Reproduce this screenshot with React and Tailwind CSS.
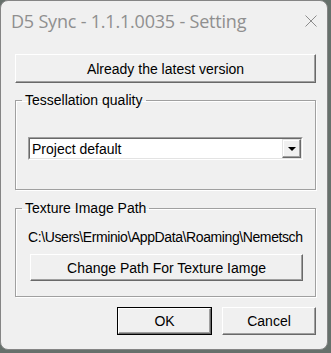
const win = "font-['Liberation_Sans',Arial,sans-serif] text-[14px] leading-[16px] text-black";

function RaisedButton({ className = '', children, isDefault = false }) {
    return (
        <div className={`${isDefault ? 'border border-black' : ''} ${className}`}>
            <div className="h-full w-full border border-t-white border-l-white border-r-[#696969] border-b-[#696969] bg-[#f0f0f0] shadow-[inset_-1px_-1px_0_#a0a0a0] flex items-center justify-center">
                {children}
            </div>
        </div>
    );
}

function GroupBox({ label, className = '', children }) {
    return (
        <fieldset className={`min-w-0 border border-[#a0a0a0] shadow-[1px_1px_0_#ffffff,inset_1px_1px_0_#ffffff] ${className}`}>
            <legend className="-ml-[6px] px-[3px]">{label}</legend>
            {children}
        </fieldset>
    );
}

export default function App() {
    return (
        <div className="w-[331px] h-[353px] bg-[#66706b] overflow-hidden">
            <div className={`w-[328px] h-[350px] rounded-[8px] bg-[#f0f0f0] border border-[#858585] overflow-hidden flex flex-col ${win}`}>
                {/* Title bar */}
                <div className="h-[39px] flex items-center justify-between pl-[10px] pr-[10px]">
                    <span className="font-['Open_Sans',sans-serif] text-[18px] leading-[20px] text-[#8f8f8f] tracking-[-0.2px]">
                        D5 Sync - 1.1.1.0035 - Setting
                    </span>
                    <svg width="12" height="12" viewBox="0 0 12 12" className="mt-[1px]">
                        <path d="M0.5 0.5 L11.5 11.5 M11.5 0.5 L0.5 11.5" stroke="#8c8c8c" strokeWidth="1" />
                    </svg>
                </div>

                <div className="flex flex-col pl-[14px] pr-[11px]">
                    <RaisedButton className="mt-[14px] h-[29px]">Already the latest version</RaisedButton>

                    <GroupBox label="Tessellation quality" className="mt-[9px] h-[98px] px-[12px]">
                        <div className="mt-[29px] h-[23px] border border-t-[#a0a0a0] border-l-[#a0a0a0] border-r-white border-b-white">
                            <div className="h-full border border-t-[#696969] border-l-[#696969] border-r-[#e3e3e3] border-b-[#e3e3e3] bg-white flex items-center justify-between pl-[2px]">
                                <span>Project default</span>
                                <div className="w-[19px] h-full border border-t-[#e3e3e3] border-l-[#e3e3e3] border-r-[#696969] border-b-[#696969] bg-[#f0f0f0] shadow-[inset_-1px_-1px_0_#a0a0a0,inset_1px_1px_0_#ffffff] flex items-center justify-center">
                                    <svg width="8" height="4" viewBox="0 0 8 4">
                                        <path d="M0 0 H8 L4 4 Z" fill="#000" />
                                    </svg>
                                </div>
                            </div>
                        </div>
                    </GroupBox>

                    <GroupBox label="Texture Image Path" className="mt-[10px] h-[97px] px-[12px]">
                        <div className="mt-[13px] whitespace-nowrap tracking-[-0.4px]">
                            C:\Users\Erminio\AppData\Roaming\Nemetsch
                        </div>
                        <RaisedButton className="mt-[9px] h-[27px] ml-[2px]">Change Path For Texture Iamge</RaisedButton>
                    </GroupBox>

                    <div className="mt-[10px] flex justify-end gap-[10px]">
                        <RaisedButton isDefault className="w-[95px] h-[28px]">OK</RaisedButton>
                        <RaisedButton className="w-[94px] h-[28px]">Cancel</RaisedButton>
                    </div>
                </div>
            </div>
        </div>
    );
}
